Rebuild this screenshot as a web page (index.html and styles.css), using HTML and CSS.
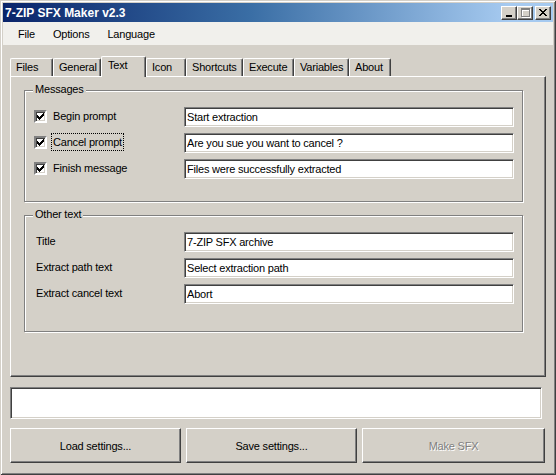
FILE: index.html
```html
<!DOCTYPE html>
<html>
<head>
<meta charset="utf-8">
<title>7-ZIP SFX Maker v2.3</title>
<link rel="stylesheet" href="styles.css">
</head>
<body>
<div class="window">
  <div class="titlebar">
    <span class="title">7-ZIP SFX Maker v2.3</span>
    <div class="caption-buttons">
      <span class="cap-btn"><svg width="14" height="12" viewBox="0 0 14 12"><rect x="4" y="8" width="6" height="2" fill="#000"/></svg></span>
      <span class="cap-btn"><svg width="14" height="12" viewBox="0 0 14 12" shape-rendering="crispEdges"><path d="M4 2h9v9h-9z M5 4v6h7v-6z" fill="#fff" fill-rule="evenodd"/><path d="M3 1h9v9h-9z M4 3v6h7v-6z" fill="#808080" fill-rule="evenodd"/></svg></span>
      <span class="cap-btn close"><svg width="14" height="12" viewBox="0 0 14 12" shape-rendering="crispEdges"><path d="M3 2h2v1h-2z M9 2h2v1h-2z M4 3h2v1h-2z M8 3h2v1h-2z M5 4h4v1h-4z M6 5h2v1h-2z M5 6h4v1h-4z M4 7h2v1h-2z M8 7h2v1h-2z M3 8h2v1h-2z M9 8h2v1h-2z" fill="#000"/></svg></span>
    </div>
  </div>
  <div class="menubar">
    <span class="menu-item">File</span>
    <span class="menu-item">Options</span>
    <span class="menu-item">Language</span>
  </div>
  <div class="client">
    <div class="tabs">
      <div class="tab w-files">Files</div>
      <div class="tab w-general">General</div>
      <div class="tab tab-active w-text">Text</div>
      <div class="tab w-icon">Icon</div>
      <div class="tab w-shortcuts">Shortcuts</div>
      <div class="tab w-execute">Execute</div>
      <div class="tab w-variables">Variables</div>
      <div class="tab w-about">About</div>
    </div>
    <div class="panel">
      <div class="group group-messages">
        <span class="group-label">Messages</span>
        <div class="row">
          <div class="lab">
            <span class="check"><svg width="9" height="9" viewBox="0 0 9 9" shape-rendering="crispEdges"><path d="M1 3h1v3h-1z M2 4h1v3h-1z M3 5h1v3h-1z M4 4h1v3h-1z M5 3h1v3h-1z M6 2h1v3h-1z M7 1h1v3h-1z" fill="#000"/></svg></span>
            <span class="check-text">Begin prompt</span>
          </div>
          <input class="field" type="text" value="Start extraction">
        </div>
        <div class="row">
          <div class="lab">
            <span class="check"><svg width="9" height="9" viewBox="0 0 9 9" shape-rendering="crispEdges"><path d="M1 3h1v3h-1z M2 4h1v3h-1z M3 5h1v3h-1z M4 4h1v3h-1z M5 3h1v3h-1z M6 2h1v3h-1z M7 1h1v3h-1z" fill="#000"/></svg></span>
            <span class="check-text focused">Cancel prompt</span>
          </div>
          <input class="field" type="text" value="Are you sue you want to cancel ?">
        </div>
        <div class="row">
          <div class="lab">
            <span class="check"><svg width="9" height="9" viewBox="0 0 9 9" shape-rendering="crispEdges"><path d="M1 3h1v3h-1z M2 4h1v3h-1z M3 5h1v3h-1z M4 4h1v3h-1z M5 3h1v3h-1z M6 2h1v3h-1z M7 1h1v3h-1z" fill="#000"/></svg></span>
            <span class="check-text">Finish message</span>
          </div>
          <input class="field" type="text" value="Files were successfully extracted">
        </div>
      </div>
      <div class="group group-other">
        <span class="group-label">Other text</span>
        <div class="row">
          <div class="lab"><span class="plain-label">Title</span></div>
          <input class="field" type="text" value="7-ZIP SFX archive">
        </div>
        <div class="row">
          <div class="lab"><span class="plain-label">Extract path text</span></div>
          <input class="field" type="text" value="Select extraction path">
        </div>
        <div class="row">
          <div class="lab"><span class="plain-label">Extract cancel text</span></div>
          <input class="field" type="text" value="Abort">
        </div>
      </div>
    </div>
    <div class="status"></div>
    <div class="buttons">
      <div class="btn btn-fixed">Load settings...</div>
      <div class="btn btn-fixed">Save settings...</div>
      <div class="btn btn-grow btn-disabled">Make SFX</div>
    </div>
  </div>
</div>
</body>
</html>
```
FILE: styles.css
```css
* { box-sizing: border-box; }

html, body {
  margin: 0;
  padding: 0;
  background: #d4d0c8;
}

body {
  font-family: "Liberation Sans", Arial, sans-serif;
  font-size: 11px;
  letter-spacing: -0.2px;
  color: #000;
}

.window {
  width: 556px;
  height: 475px;
  padding: 3px;
  background: #d4d0c8;
  display: flex;
  flex-direction: column;
  box-shadow: inset 1px 1px 0 #d4d0c8, inset -1px -1px 0 #404040, inset 2px 2px 0 #fff, inset -2px -2px 0 #808080;
}

.titlebar {
  height: 19px;
  flex: none;
  display: flex;
  align-items: center;
  justify-content: space-between;
  padding: 0 2px 0 2px;
  background: linear-gradient(to right, #0a246a 0%, #3a6ea5 45%, #a6caf0 92%, #a6caf0 100%);
}

.title {
  color: #fff;
  font-weight: bold;
  font-size: 12px;
  letter-spacing: 0;
}

.caption-buttons {
  display: flex;
  align-items: center;
}

.cap-btn {
  width: 16px;
  height: 14px;
  display: block;
  background: #d4d0c8;
  border: 1px solid;
  border-color: #fff #404040 #404040 #fff;
  box-shadow: inset -1px -1px 0 #808080;
}

.cap-btn svg { display: block; }

.cap-btn.close { margin-left: 2px; }

.menubar {
  height: 23px;
  flex: none;
  display: flex;
  align-items: center;
  padding-left: 6px;
  background: #f1f0ec;
}

.menu-item {
  padding: 0 9px;
}

.client {
  flex: 1;
  padding: 11px 7px 0 7px;
  display: flex;
  flex-direction: column;
}

.tabs {
  height: 20px;
  display: flex;
  align-items: flex-end;
  position: relative;
  z-index: 1;
}

.tab {
  height: 18px;
  line-height: 17px;
  padding-left: 5px;
  background: #d4d0c8;
  border-top: 1px solid #fff;
  border-left: 1px solid #fff;
  border-right: 1px solid #404040;
  box-shadow: inset -1px 0 0 #808080;
  border-top-left-radius: 2px;
  border-top-right-radius: 2px;
  white-space: nowrap;
}

.tab-active {
  height: 21px;
  margin-bottom: -1px;
  line-height: 16px;
  padding-left: 6px;
}

.w-files { width: 43px; }
.w-general { width: 48px; }
.w-text { width: 45px; }
.w-icon { width: 40px; }
.w-shortcuts { width: 57px; }
.w-execute { width: 51px; }
.w-variables { width: 55px; }
.w-about { width: 42px; }

.panel {
  height: 301px;
  flex: none;
  padding: 13px 0 0 13px;
  border: 1px solid;
  border-color: #fff #404040 #404040 #fff;
  box-shadow: inset -1px -1px 0 #808080;
}

.group {
  position: relative;
  width: 499px;
  border: 1px solid #808080;
  box-shadow: 1px 1px 0 #fff, inset 1px 1px 0 #fff;
  padding: 16px 8px 0 9px;
}

.group-messages { height: 112px; }
.group-other { height: 117px; margin-top: 13px; }

.group-label {
  position: absolute;
  top: -8px;
  left: 8px;
  padding: 0 2px;
  line-height: 13px;
  background: #d4d0c8;
}

.row {
  height: 20px;
  margin-bottom: 6px;
  display: flex;
  align-items: center;
}

.lab {
  width: 150px;
  flex: none;
  display: flex;
  align-items: center;
  margin-top: -2px;
}

.check {
  width: 13px;
  height: 13px;
  flex: none;
  background: #fff;
  border: 2px solid;
  border-color: #808080 #fff #fff #808080;
  box-shadow: inset 1px 1px 0 #404040, inset -1px -1px 0 #d4d0c8;
  margin-right: 4px;
  position: relative;
}

.check svg {
  display: block;
  position: absolute;
  left: 0;
  top: 0;
}

.check-text {
  border: 1px dotted transparent;
  padding: 1px 1px;
  line-height: 14px;
  white-space: nowrap;
}

.check-text.focused {
  border-color: #000;
}

.plain-label {
  padding-left: 2px;
}

.field {
  flex: 1;
  min-width: 0;
  height: 20px;
  margin: 0;
  padding: 0 2px;
  font-family: "Liberation Sans", Arial, sans-serif;
  font-size: 11px;
  letter-spacing: -0.2px;
  color: #000;
  background: #fff;
  border: 1px solid;
  border-color: #808080 #fff #fff #808080;
  box-shadow: inset 1px 1px 0 #404040, inset -1px -1px 0 #d4d0c8;
  outline: none;
}

.status {
  width: 532px;
  height: 32px;
  margin-top: 10px;
  background: #fff;
  border: 1px solid;
  border-color: #808080 #fff #fff #808080;
  box-shadow: inset 1px 1px 0 #404040, inset -1px -1px 0 #d4d0c8;
}

.buttons {
  margin-top: 9px;
  display: flex;
  gap: 5px;
  padding-right: 1px;
}

.btn {
  height: 35px;
  display: flex;
  align-items: center;
  justify-content: center;
  background: #d4d0c8;
  border: 1px solid;
  border-color: #fff #404040 #404040 #fff;
  box-shadow: inset -1px -1px 0 #808080;
}

.btn-fixed { width: 171px; flex: none; }
.btn-grow { flex: 1; }

.btn-disabled {
  color: #808080;
  text-shadow: 1px 1px 0 #fff;
}
```
